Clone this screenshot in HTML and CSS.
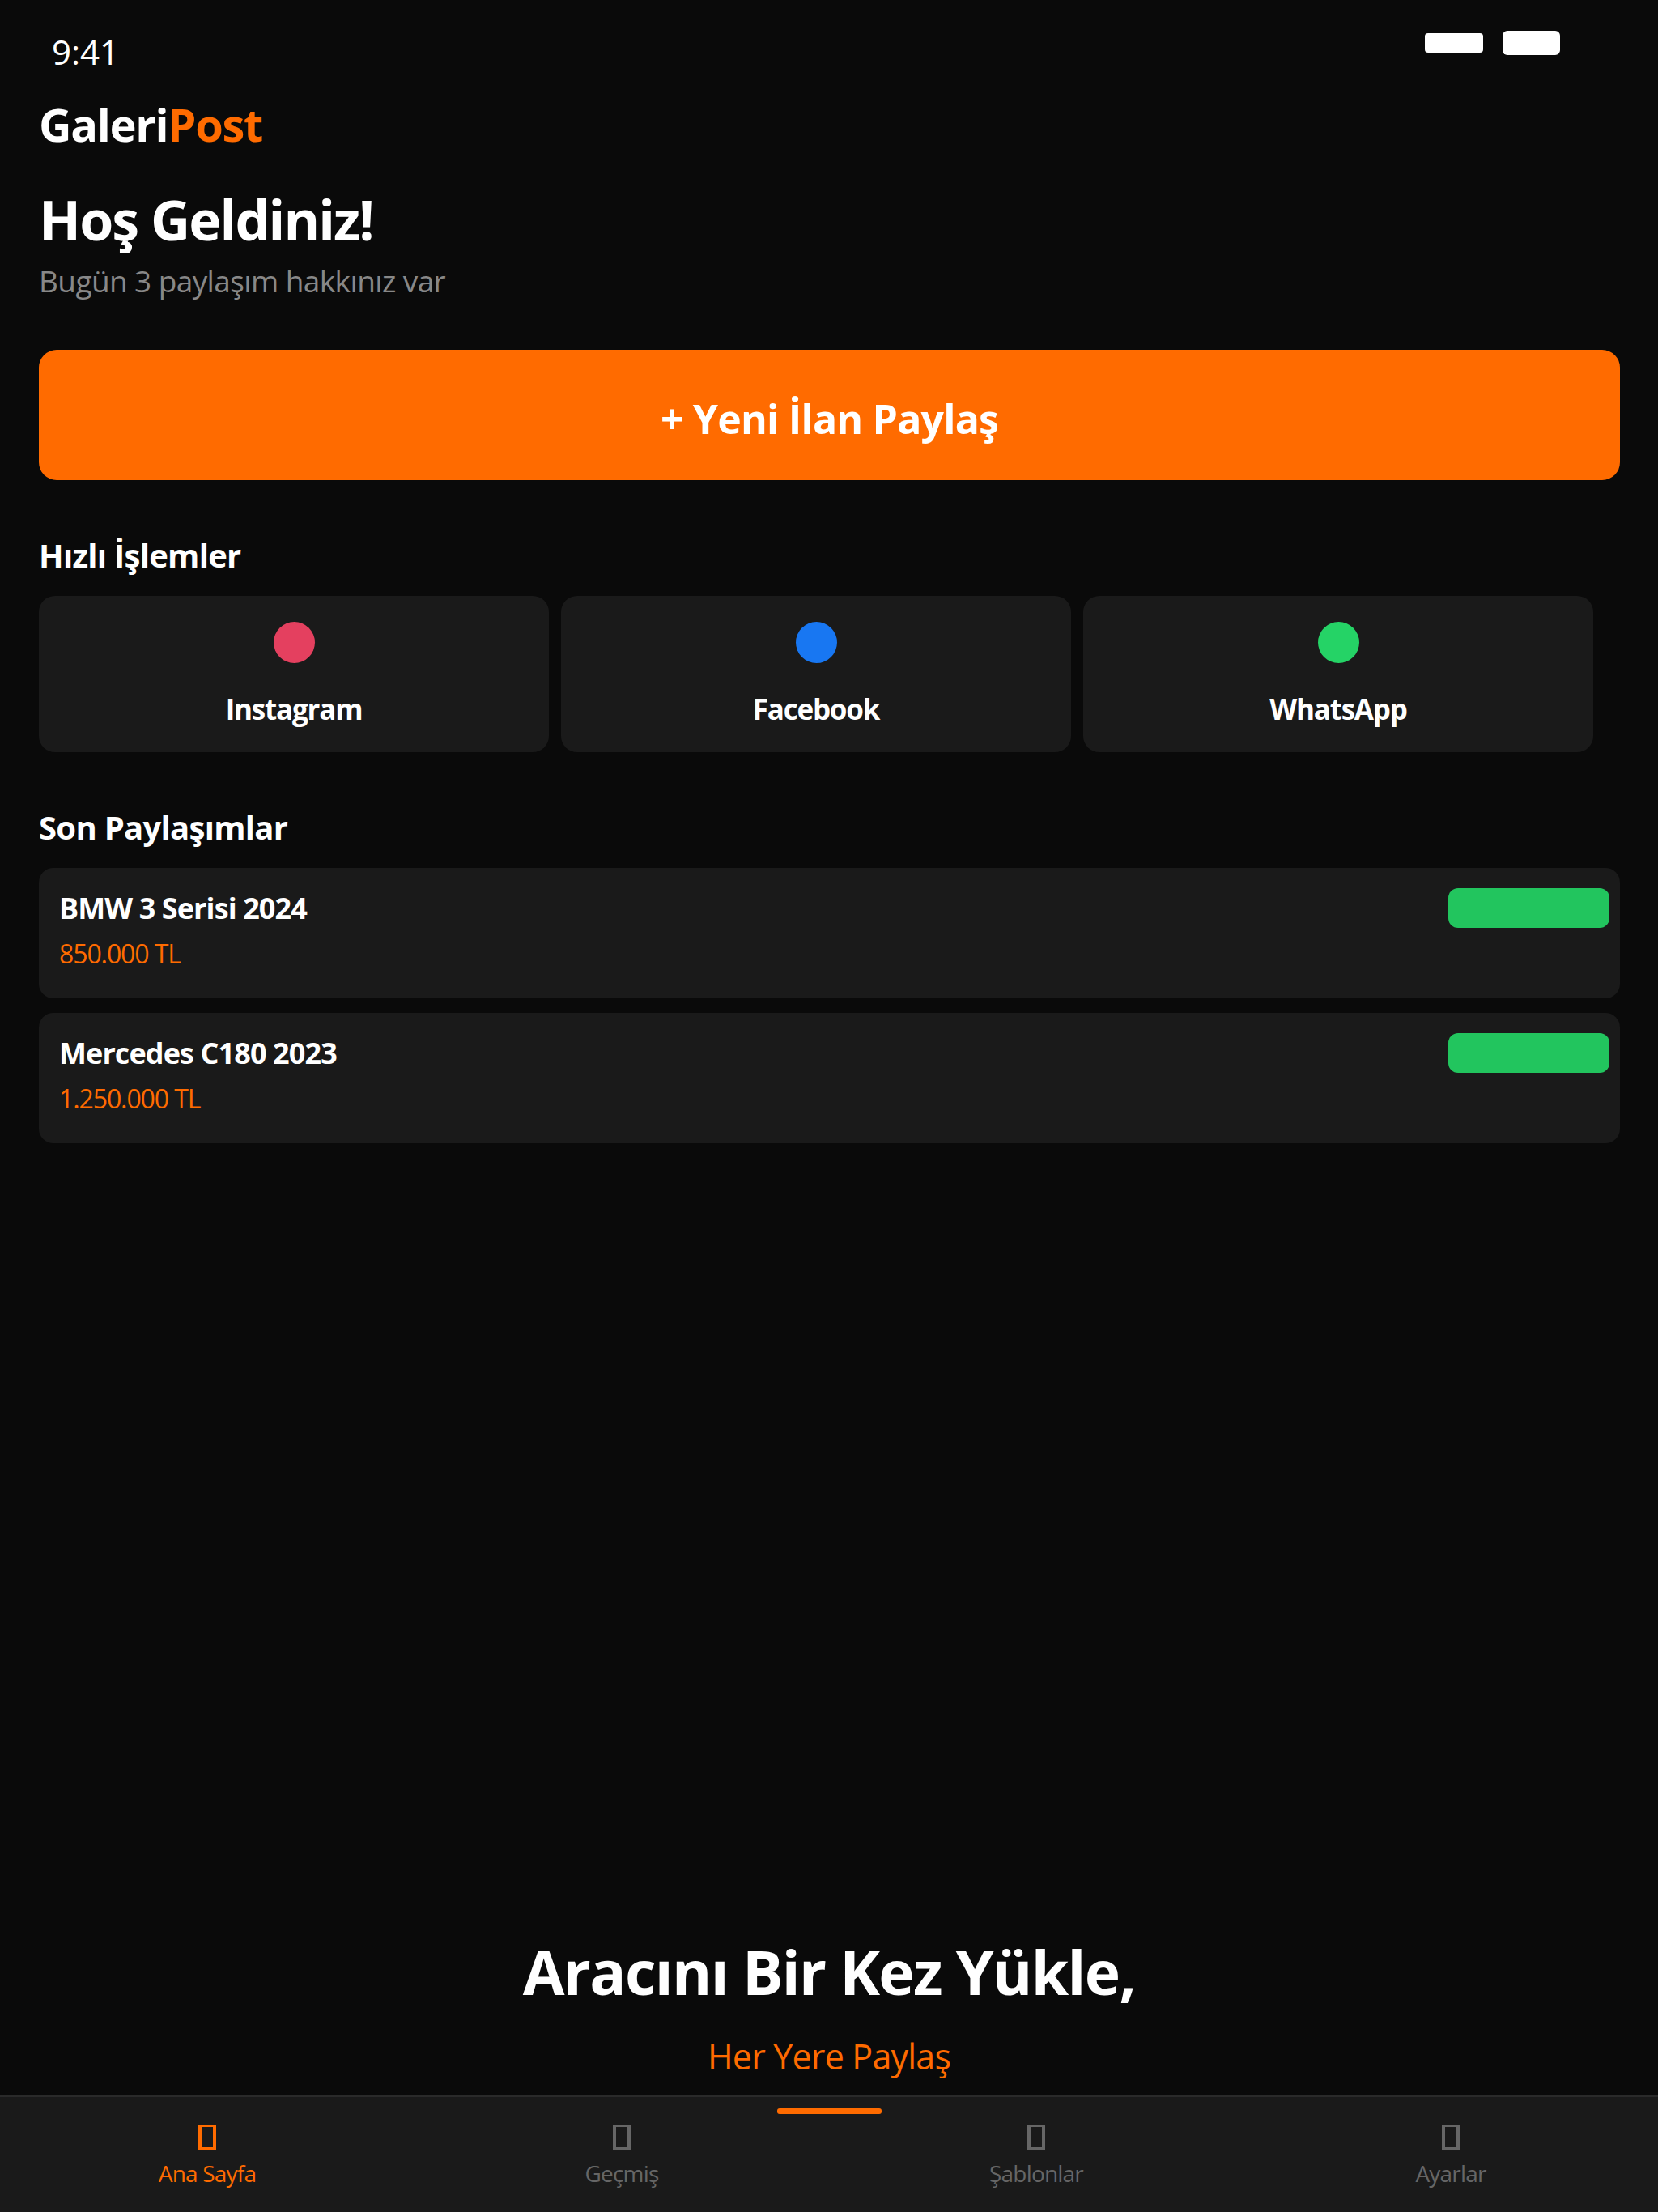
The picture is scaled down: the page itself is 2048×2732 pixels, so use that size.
FILE: index.html
```html
<!DOCTYPE html>
<html lang="tr">
<head>
<meta charset="utf-8">
<title>GaleriPost</title>
<link rel="stylesheet" href="styles.css">
</head>
<body>
<div class="app">
  <header class="status">
    <span class="time">9:41</span>
    <div class="status-icons"><span class="sig"></span><span class="bat"></span></div>
  </header>
  <main class="content">
    <div class="logo">Galeri<span class="accent">Post</span></div>
    <h1 class="welcome">Hoş Geldiniz!</h1>
    <p class="sub">Bugün 3 paylaşım hakkınız var</p>
    <button class="cta">+ Yeni İlan Paylaş</button>
    <h2 class="section s1">Hızlı İşlemler</h2>
    <div class="quick">
      <div class="qcard"><span class="dot ig"></span><span class="qlabel">Instagram</span></div>
      <div class="qcard"><span class="dot fb"></span><span class="qlabel">Facebook</span></div>
      <div class="qcard"><span class="dot wa"></span><span class="qlabel">WhatsApp</span></div>
    </div>
    <h2 class="section s2">Son Paylaşımlar</h2>
    <div class="list">
      <div class="item"><div class="info"><div class="name">BMW 3 Serisi 2024</div><div class="price">850.000 TL</div></div><span class="badge"></span></div>
      <div class="item"><div class="info"><div class="name">Mercedes C180 2023</div><div class="price">1.250.000 TL</div></div><span class="badge"></span></div>
    </div>
  </main>
  <section class="hero">
    <div class="hero-title">Aracını Bir Kez Yükle,</div>
    <div class="hero-sub">Her Yere Paylaş</div>
  </section>
  <nav class="tabs">
    <span class="home-ind"></span>
    <div class="tab active"><span class="tofu"></span><span class="tlabel">Ana Sayfa</span></div>
    <div class="tab"><span class="tofu"></span><span class="tlabel">Geçmiş</span></div>
    <div class="tab"><span class="tofu"></span><span class="tlabel">Şablonlar</span></div>
    <div class="tab"><span class="tofu"></span><span class="tlabel">Ayarlar</span></div>
  </nav>
</div>
</body>
</html>
```
FILE: styles.css
```css
* { box-sizing: border-box; margin: 0; padding: 0; }
html, body { width: 2048px; height: 2732px; background: #0a0a0a; overflow: hidden; }
body { font-family: "Open Sans", "Noto Sans", sans-serif; color: #fff; }
.app { width: 2048px; height: 2732px; display: flex; flex-direction: column; }
.status { height: 117px; flex: none; display: flex; justify-content: space-between; padding: 31px 121px 0 64px; }
.time { font-size: 42px; line-height: 66px; font-weight: 400; }
.status-icons { display: flex; gap: 24px; align-items: flex-start; padding-top: 7px; }
.sig { width: 72px; height: 24px; margin-top: 3px; background: #fff; border-radius: 4px; }
.bat { width: 71px; height: 30px; background: #fff; border-radius: 6px; }
.content { flex: 1; padding: 0 47px 0 48px; display: flex; flex-direction: column; }
.logo { font-size: 56px; line-height: 72px; font-weight: 700; letter-spacing: -1.3px; }
.accent { color: #ff6b00; }
.welcome { font-size: 68px; line-height: 90px; font-weight: 700; margin-top: 37px; letter-spacing: -1.9px; }
.sub { font-size: 37px; line-height: 50px; color: #888; font-weight: 400; margin-top: 6px; letter-spacing: -0.6px; }
.cta { height: 161px; margin-top: 60px; padding-top: 8px; border: 0; border-radius: 22px; background: #ff6b00; color: #fff; font: inherit; font-size: 50px; font-weight: 700; letter-spacing: -0.8px; }
.section { font-size: 40px; line-height: 56px; font-weight: 700; letter-spacing: -0.7px; }
.s1 { margin-top: 65px; }
.s2 { margin-top: 65px; }
.quick { display: flex; gap: 15px; margin-top: 22px; }
.qcard { width: 630px; height: 193px; background: #1a1a1a; border-radius: 20px; padding-top: 32px; display: flex; flex-direction: column; align-items: center; }
.dot { width: 51px; height: 51px; border-radius: 50%; }
.ig { background: #e4405f; }
.fb { background: #1877f2; }
.wa { background: #25d366; }
.qlabel { font-size: 35px; line-height: 48px; font-weight: 700; margin-top: 33px; letter-spacing: -1.2px; }
.list { display: flex; flex-direction: column; gap: 18px; margin-top: 22px; }
.item { height: 161px; background: #1a1a1a; border-radius: 18px; padding: 25px 13px 25px 25px; display: flex; justify-content: space-between; align-items: flex-start; }
.name { font-size: 36px; line-height: 50px; font-weight: 700; letter-spacing: -0.9px; }
.price { font-size: 32px; line-height: 44px; color: #ff6b00; margin-top: 9px; letter-spacing: -1.1px; }
.badge { width: 199px; height: 49px; background: #22c55e; border-radius: 12px; }
.hero { flex: none; text-align: center; padding-bottom: 18px; }
.hero-title { font-size: 75px; line-height: 100px; font-weight: 700; letter-spacing: -1.63px; }
.hero-sub { font-size: 43px; line-height: 60px; color: #ff6b00; margin-top: 25px; letter-spacing: -0.8px; }
.tabs { position: relative; flex: none; height: 144px; background: #1a1a1a; border-top: 2px solid #2a2a2a; display: grid; grid-template-columns: repeat(4, 512px); }
.tab { display: flex; flex-direction: column; align-items: center; padding-top: 34px; color: #666; }
.tab.active { color: #ff6b00; }
.tofu { width: 22px; height: 31px; border: solid currentColor; border-width: 3px 4px; }
.tlabel { font-size: 28px; line-height: 38px; margin-top: 10px; letter-spacing: -0.8px; }
.home-ind { position: absolute; left: 960px; top: 14px; width: 129px; height: 7px; background: #ff6b00; border-radius: 3px; }
```
